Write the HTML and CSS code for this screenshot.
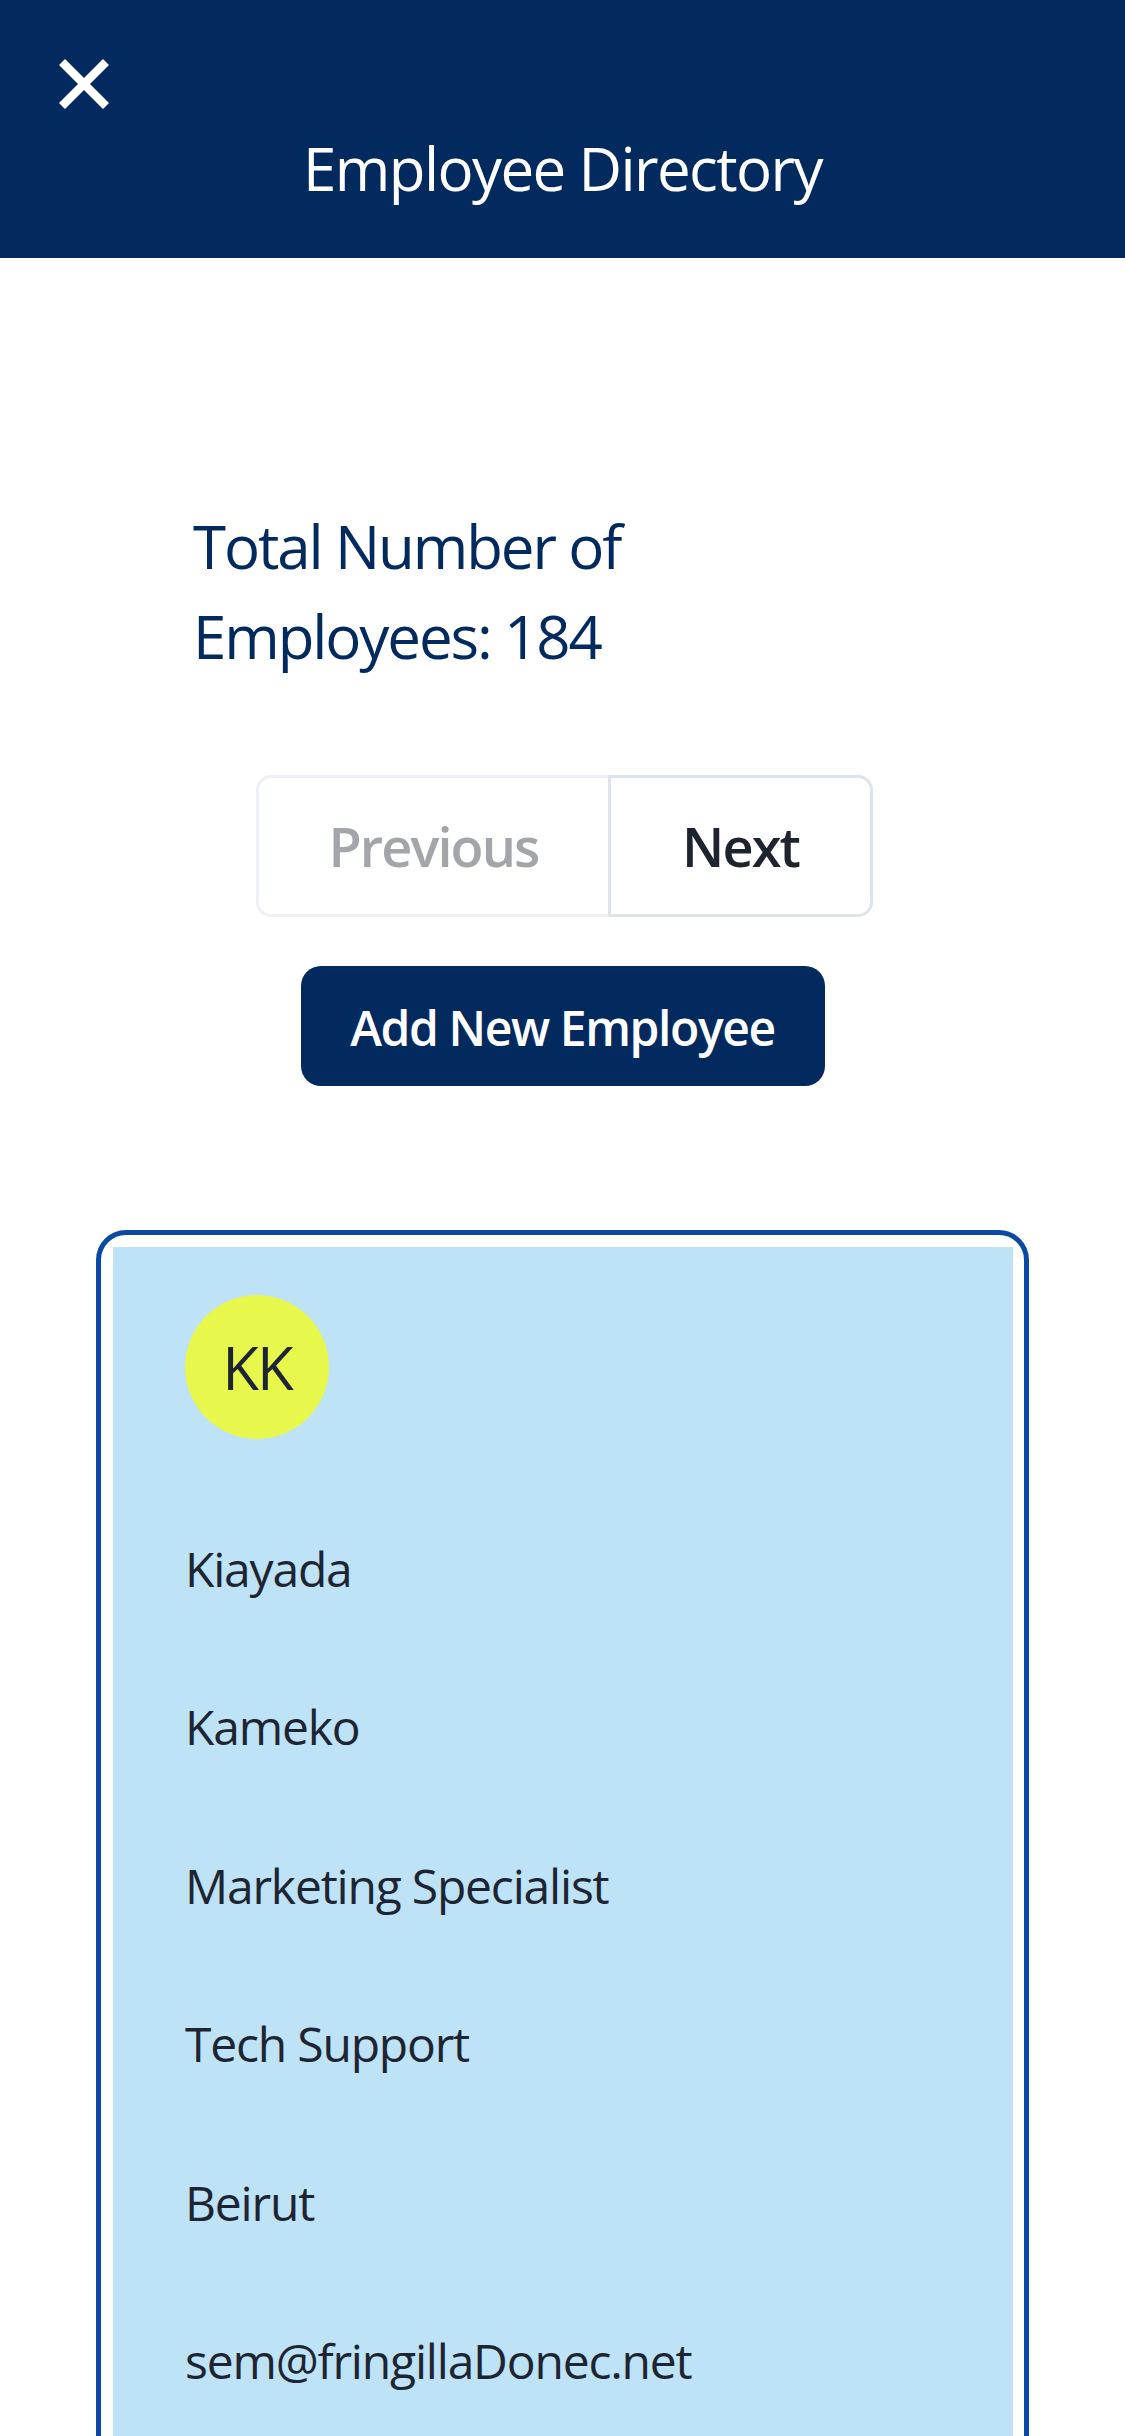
FILE: index.html
```html
<!DOCTYPE html>
<html lang="en">
<head>
<meta charset="utf-8">
<title>Employee Directory</title>
<link rel="stylesheet" href="styles.css">
</head>
<body>
<header class="topbar">
  <button class="close-btn" aria-label="Close">
    <svg width="50" height="50" viewBox="0 0 50 50"><path d="M3 3 L47 47 M47 3 L3 47" stroke="#ffffff" stroke-width="8.5" stroke-linecap="butt" fill="none"/></svg>
  </button>
  <h1 class="title">Employee Directory</h1>
</header>
<main class="content">
  <p class="total">Total Number of Employees: 184</p>
  <nav class="pager">
    <button class="page-btn prev">Previous</button>
    <button class="page-btn next">Next</button>
  </nav>
  <div class="add-wrap">
    <button class="add-btn">Add New Employee</button>
  </div>
  <section class="card">
    <div class="card-inner">
      <div class="avatar">KK</div>
      <div class="fields">
        <p class="field">Kiayada</p>
        <p class="field">Kameko</p>
        <p class="field">Marketing Specialist</p>
        <p class="field">Tech Support</p>
        <p class="field">Beirut</p>
        <p class="field">sem@fringillaDonec.net</p>
      </div>
    </div>
  </section>
</main>
</body>
</html>
```
FILE: styles.css
```css
* { box-sizing: border-box; }
html, body { margin: 0; padding: 0; background: #ffffff; }
body {
  font-family: "Open Sans", "Noto Sans", sans-serif;
  color: #1e2532;
  width: 1125px;
}
.topbar {
  background: #032a5f;
  height: 258px;
  padding: 59px 0 0 59px;
  display: flex;
  flex-direction: column;
}
.close-btn {
  width: 50px;
  height: 50px;
  padding: 0;
  border: 0;
  background: transparent;
  display: block;
}
.close-btn svg { display: block; }
.title {
  margin: 14px 0 0 -59px;
  font-weight: 400;
  font-size: 60px;
  line-height: 90px;
  color: #ffffff;
  text-align: center;
  letter-spacing: -1.6px;
}
.total {
  margin: 243px 0 0 193px;
  width: 560px;
  font-size: 60px;
  line-height: 90px;
  color: #032a5f;
  letter-spacing: -2.1px;
}
.pager {
  display: flex;
  justify-content: center;
  margin-top: 94px;
  padding-left: 4px;
}
.page-btn {
  font-family: inherit;
  font-size: 54px;
  font-weight: 600;
  line-height: 81px;
  height: 142px;
  padding: 28px 0 27px;
  background: #ffffff;
  text-align: center;
  letter-spacing: -1.9px;
}
.prev {
  width: 352px;
  color: #a2a5aa;
  border: 3px solid #edf0f4;
  border-right: 0;
  border-radius: 15px 0 0 15px;
}
.next {
  width: 265px;
  color: #1e2330;
  border: 3px solid #dde4ee;
  border-radius: 0 15px 15px 0;
}
.add-wrap {
  display: flex;
  justify-content: center;
  margin-top: 49px;
}
.add-btn {
  font-family: inherit;
  width: 524px;
  height: 120px;
  padding: 26px 0 22px;
  font-size: 48px;
  font-weight: 600;
  line-height: 72px;
  color: #ffffff;
  background: #032a5f;
  border: 0;
  border-radius: 20px;
  letter-spacing: -1.4px;
}
.card {
  margin: 144px 0 0 96px;
  width: 933px;
  border: 5px solid #0a4aa5;
  border-radius: 30px;
  padding: 12px 11px 0 12px;
}
.card-inner {
  background: #bee2f6;
  padding: 48px 72px 120px 72px;
}
.avatar {
  width: 144px;
  height: 144px;
  border-radius: 50%;
  background: #e8f74b;
  color: #1e2532;
  display: flex;
  align-items: center;
  justify-content: center;
  font-size: 60px;
  line-height: 1;
  letter-spacing: -2px;
}
.fields {
  display: flex;
  flex-direction: column;
  gap: 86.4px;
  margin-top: 94px;
}
.field {
  margin: 0;
  font-size: 48px;
  line-height: 72px;
  color: #1e2532;
  letter-spacing: -1.2px;
}
```
